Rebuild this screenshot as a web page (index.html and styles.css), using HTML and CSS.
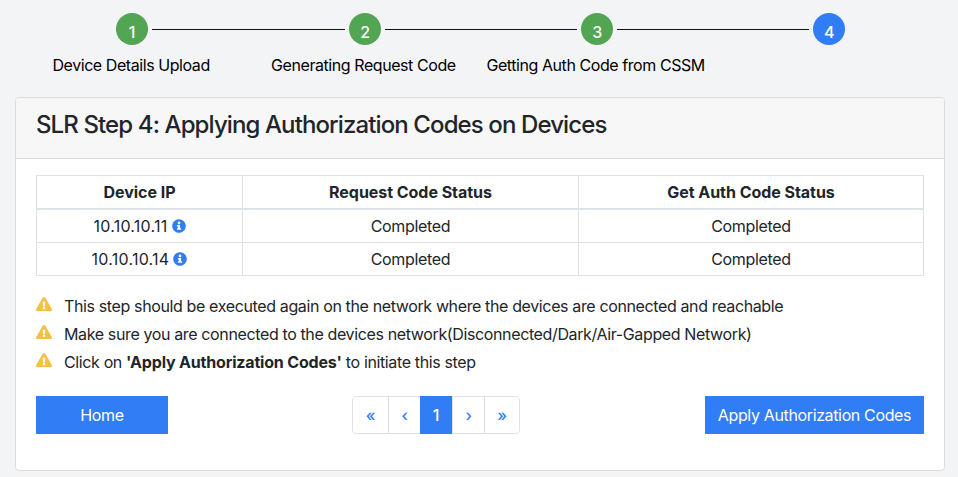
FILE: index.html
```html
<!DOCTYPE html>
<html lang="en">
<head>
<meta charset="utf-8">
<title>SLR Step 4</title>
<link rel="stylesheet" href="styles.css">
</head>
<body>
<svg class="defs" width="0" height="0" aria-hidden="true">
  <symbol id="info" viewBox="0 0 512 512"><path d="M256 8C119 8 8 119 8 256s111 248 248 248 248-111 248-248S393 8 256 8zm0 84a50 50 0 1 1 0 100 50 50 0 0 1 0-100zm76 292a12 12 0 0 1-12 12H192a12 12 0 0 1-12-12v-34a12 12 0 0 1 12-12h22v-62h-22a12 12 0 0 1-12-12v-34a12 12 0 0 1 12-12h92a12 12 0 0 1 12 12v108h24a12 12 0 0 1 12 12z"/></symbol>
  <symbol id="warn" viewBox="0 0 576 512"><path d="M569.500 440C588 472 564.800 512 527.900 512H48.100c-36.900 0-60-40-41.600-72L246.400 24c18.500-32 64.700-32 83.200 0zM288 354a46 46 0 1 0 0 92 46 46 0 0 0 0-92zm-43.700-165.300 7.400 136a12 12 0 0 0 12 11.300h48.500a12 12 0 0 0 12-11.300l7.400-136a12 12 0 0 0-12-12.700h-63.400a12 12 0 0 0-11.900 12.700z"/></symbol>
</svg>
<nav class="steps">
  <div class="track">
    <span class="dot">1</span><span class="line"></span>
    <span class="dot">2</span><span class="line"></span>
    <span class="dot">3</span><span class="line"></span>
    <span class="dot current">4</span>
  </div>
  <div class="labels">
    <span>Device Details Upload</span>
    <span>Generating Request Code</span>
    <span>Getting Auth Code from CSSM</span>
    <span></span>
  </div>
</nav>
<main class="card">
  <header class="card-header"><h1>SLR Step 4: Applying Authorization Codes on Devices</h1></header>
  <div class="card-body">
    <table>
      <colgroup><col class="c1"><col class="c2"><col class="c3"></colgroup>
      <thead><tr><th>Device IP</th><th>Request Code Status</th><th>Get Auth Code Status</th></tr></thead>
      <tbody>
        <tr><td><span class="ip">10.10.10.11</span><svg class="info"><use href="#info"/></svg></td><td>Completed</td><td>Completed</td></tr>
        <tr><td><span class="ip">10.10.10.14</span><svg class="info"><use href="#info"/></svg></td><td>Completed</td><td>Completed</td></tr>
      </tbody>
    </table>
    <ul class="notes">
      <li><svg class="warn"><use href="#warn"/></svg><span>This step should be executed again on the network where the devices are connected and reachable</span></li>
      <li><svg class="warn"><use href="#warn"/></svg><span>Make sure you are connected to the devices network(Disconnected/Dark/Air-Gapped Network)</span></li>
      <li><svg class="warn"><use href="#warn"/></svg><span>Click on <b>'Apply Authorization Codes'</b> to initiate this step</span></li>
    </ul>
    <div class="actions">
      <button class="btn home">Home</button>
      <div class="pages">
        <a class="edge">«</a><a>‹</a><a class="active">1</a><a>›</a><a class="edge">»</a>
      </div>
      <button class="btn apply">Apply Authorization Codes</button>
    </div>
  </div>
</main>
</body>
</html>
```

FILE: styles.css
```css
* { box-sizing: border-box; }
body {
  margin: 0;
  height: 477px;
  overflow: hidden;
  background: #f3f4f6;
  color: #212529;
  font: 16px/24px Inter, "Liberation Sans", sans-serif;
  letter-spacing: -0.32px;
}
.defs { display: block; height: 0; }
.steps { padding-top: 13px; color: #000; }
.track { display: flex; align-items: center; padding: 0 113px 0 116px; }
.dot {
  width: 32px;
  height: 32px;
  padding-top: 7px;
  border-radius: 50%;
  background: #52a552;
  color: #fff;
  text-align: center;
  font-weight: 500;
}
.dot.current { background: #307df6; }
.line { flex: 1; height: 1px; margin: 0 4px; background: #111; }
.line:nth-child(2) { flex: 0 0 193px; }
.labels {
  display: grid;
  grid-template-columns: repeat(4, 1fr);
  margin: 8px 14px 0 15px;
  text-align: center;
  letter-spacing: -0.43px;
}
.card {
  width: 930px;
  height: 374px;
  margin: 20px 0 0 15px;
  border: 1px solid #dcdddf;
  border-radius: 4px;
  background: #fff;
}
.card-header {
  height: 61px;
  padding: 12px 20px;
  border-bottom: 1px solid #dcdcdd;
  border-radius: 3px 3px 0 0;
  background: #f7f7f7;
}
h1 { margin: 0; font-size: 24px; line-height: 29px; font-weight: 500; letter-spacing: -0.89px; }
.card-body { padding: 16px 20px; }
table { width: 888px; border-collapse: collapse; table-layout: fixed; text-align: center; }
.c1 { width: 206px; }
.c2 { width: 336px; }
th, td { height: 33px; padding: 4px; border: 1px solid #dee2e6; }
th { border-bottom-width: 2px; font-weight: 700; letter-spacing: -0.04px; }
.ip { letter-spacing: 0.25px; }
.info { width: 14px; height: 14px; margin-left: 4px; vertical-align: -1px; fill: #307df6; }
.notes { margin: 16px 0 0; padding: 0; list-style: none; letter-spacing: -0.37px; }
.notes li { display: flex; height: 28px; padding-top: 2px; }
.warn { width: 16px; height: 16px; margin: 2px 12px 0 0; fill: #f5c046; }
b { font-weight: 700; letter-spacing: -0.18px; }
.actions { display: flex; justify-content: space-between; margin-top: 20px; }
.btn {
  height: 38px;
  padding: 0;
  border: 0;
  background: #307df6;
  color: #fff;
  font: inherit;
  letter-spacing: -0.36px;
}
.home { width: 132px; }
.apply { width: 219px; }
.pages {
  display: flex;
  width: 168px;
  margin-left: 51px;
  margin-right: 52px;
  border: 1px solid #dee2e6;
  border-radius: 4px;
  color: #307df6;
}
.pages a { width: 32px; line-height: 36px; text-align: center; border-left: 1px solid #dee2e6; font-weight: 500; }
.pages .edge { width: 35px; }
.pages a:first-child { border-left: 0; }
.pages .active { margin: -1px 0; line-height: 38px; border: 0; background: #307df6; color: #fff; }
```
